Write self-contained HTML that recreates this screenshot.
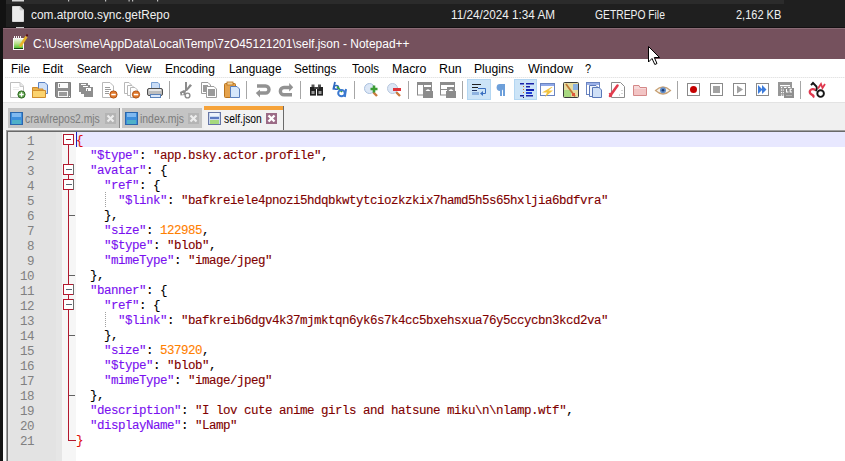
<!DOCTYPE html>
<html><head><meta charset="utf-8">
<style>
*{margin:0;padding:0;box-sizing:border-box}
html,body{width:845px;height:461px;overflow:hidden;background:#1f1f1f;position:relative;font-family:"Liberation Sans",sans-serif}
.a{position:absolute}
.ex,.mi,.tt{transform-origin:0 0}
.ex{color:#f0f0f0;font-size:12px;white-space:nowrap;line-height:14px}
#title{left:3px;top:28px;width:842px;height:31px;background:#75515d;border-top:1px solid #8a6b75}
#menu{left:3px;top:59px;width:842px;height:44px;background:#fff}
.mi{font-size:12px;color:#000;top:62px;line-height:14px;white-space:nowrap}
#tabbar{left:3px;top:103px;width:842px;height:27px;background:#f0f0f0}
.tab{top:108px;height:20px;background:#c4c4c4}
.tt{font-size:12px;line-height:14px;top:112px;white-space:nowrap}
#edb{left:6px;top:130px;width:839px;height:331px;background:#a0a0a0}
#edb2{left:7px;top:131px;width:838px;height:330px;background:#696969}
#lstrip{left:3px;top:130px;width:3px;height:331px;background:#f8f8f8}
#ln{left:8px;top:132px;width:48px;height:329px;background:#e3e3e3}
#bm{left:56px;top:132px;width:6px;height:329px;background:#e6e6e6}
#fold{left:62px;top:132px;width:14px;height:329px;background:#f6f6f6}
#txt{left:76px;top:132px;width:769px;height:329px;background:#fff}
#cur{left:76px;top:132px;width:769px;height:15px;background:#e8e8ff}
.code{font-family:"Liberation Mono",monospace;font-size:12.5px;letter-spacing:-0.5px;-webkit-text-stroke:0.12px currentColor;line-height:15px;white-space:pre;left:76px;top:134px;color:#000}
.k{color:#7a10f0}.s{color:#800000}.n{color:#ff8000}.b{color:#e01010}
.lnn{font-family:"Liberation Mono",monospace;font-size:12.5px;letter-spacing:-0.5px;line-height:15px;white-space:pre;color:#808080;left:0px;top:135px;width:34px;text-align:right}
</style></head><body>
<!-- explorer -->
<div class="a" style="left:6px;top:0;width:778px;height:4px;background:#2b2b2b"></div>
<div class="a" style="left:0;top:0;width:6px;height:28px;background:#121212"></div>

<div id="t_name" class="a ex" style="left:31.0px;top:8px;transform:scaleX(0.9893)">com.atproto.sync.getRepo</div>
<div id="t_date" class="a ex" style="left:451.06px;top:8px;transform:scaleX(0.9762)">11/24/2024 1:34 AM</div>
<div id="t_type" class="a ex" style="left:595.31px;top:8px;transform:scaleX(0.8593)">GETREPO File</div>
<div id="t_size" class="a ex" style="left:736.23px;top:8px;transform:scaleX(0.9167)">2,162 KB</div>
<div class="a" style="left:0;top:28px;width:3px;height:433px;background:#121212"></div>

<div class="a" style="left:3px;top:27px;width:842px;height:1px;background:#141012"></div><div id="title" class="a"></div>
<div id="t_title" class="a ex" style="left:33.0px;top:37px;color:#fff;transform:scaleX(0.9973)">C:\Users\me\AppData\Local\Temp\7zO45121201\self.json - Notepad++</div>

<div id="menu" class="a"></div>
<div id="m0" class="a mi" style="left:10.87px;transform:scaleX(0.9778)">File</div>
<div id="m1" class="a mi" style="left:42.51px;transform:scaleX(1.0)">Edit</div>
<div id="m2" class="a mi" style="left:76.68px;transform:scaleX(0.9162)">Search</div>
<div id="m3" class="a mi" style="left:125.59px;transform:scaleX(1.0)">View</div>
<div id="m4" class="a mi" style="left:164.88px;transform:scaleX(1.0)">Encoding</div>
<div id="m5" class="a mi" style="left:228.76px;transform:scaleX(0.9827)">Language</div>
<div id="m6" class="a mi" style="left:293.96px;transform:scaleX(0.9786)">Settings</div>
<div id="m7" class="a mi" style="left:351.89px;transform:scaleX(0.9704)">Tools</div>
<div id="m8" class="a mi" style="left:391.78px;transform:scaleX(1.0273)">Macro</div>
<div id="m9" class="a mi" style="left:438.91px;transform:scaleX(1.03)">Run</div>
<div id="m10" class="a mi" style="left:474.17px;transform:scaleX(1.0105)">Plugins</div>
<div id="m11" class="a mi" style="left:527.89px;transform:scaleX(1.0476)">Window</div>
<div id="m12" class="a mi" style="left:585.48px;transform:scaleX(0.9167)">?</div>

<div class="a" style="left:5px;top:77px;width:840px;height:1px;background:repeating-linear-gradient(90deg,#e4e4e4 0 1px,#f4f4f4 1px 2px)"></div>
<div id="tabbar" class="a"></div>
<div class="a" style="left:3px;top:102px;width:842px;height:1px;background:#e3e3e3"></div>
<div class="a tab" style="left:8px;width:112px"></div>
<div id="tb0" class="a tt" style="left:25.47px;color:#7c7c7c;transform:scaleX(0.8628)">crawlrepos2.mjs</div>
<div class="a tab" style="left:122px;width:80px"></div>
<div id="tb1" class="a tt" style="left:140.01px;color:#7c7c7c;transform:scaleX(0.8694)">index.mjs</div>
<div class="a" style="left:204px;top:106px;width:80px;height:24px;background:#f2f2f2;border-right:1px solid #6a6a6a"></div>
<div class="a" style="left:204px;top:106px;width:79px;height:4px;background:#f6a33a"></div>
<div id="tb2" class="a tt" style="left:223.59px;color:#000;transform:scaleX(0.8591)">self.json</div>

<div id="edb" class="a"></div><div id="edb2" class="a"></div><div id="lstrip" class="a"></div>
<div id="ln" class="a"></div>
<div id="bm" class="a"></div><div id="fold" class="a"></div>
<div id="txt" class="a"></div>
<div id="cur" class="a"></div>
<div class="a lnn">1
2
3
4
5
6
7
8
9
10
11
12
13
14
15
16
17
18
19
20
21</div>
<div class="a code"><span class="b">{</span>
  <span class="k">"$type"</span>: <span class="s">"app.bsky.actor.profile"</span>,
  <span class="k">"avatar"</span>: {
    <span class="k">"ref"</span>: {
      <span class="k">"$link"</span>: <span class="s">"bafkreiele4pnozi5hdqbkwtytciozkzkix7hamd5h5s65hxljia6bdfvra"</span>
    },
    <span class="k">"size"</span>: <span class="n">122985</span>,
    <span class="k">"$type"</span>: <span class="s">"blob"</span>,
    <span class="k">"mimeType"</span>: <span class="s">"image/jpeg"</span>
  },
  <span class="k">"banner"</span>: {
    <span class="k">"ref"</span>: {
      <span class="k">"$link"</span>: <span class="s">"bafkreib6dgv4k37mjmktqn6yk6s7k4cc5bxehsxua76y5ccycbn3kcd2va"</span>
    },
    <span class="k">"size"</span>: <span class="n">537920</span>,
    <span class="k">"$type"</span>: <span class="s">"blob"</span>,
    <span class="k">"mimeType"</span>: <span class="s">"image/jpeg"</span>
  },
  <span class="k">"description"</span>: <span class="s">"I lov cute anime girls and hatsune miku\n\nlamp.wtf"</span>,
  <span class="k">"displayName"</span>: <span class="s">"Lamp"</span>
<span class="b">}</span></div>
<svg class="a" style="left:0;top:0" width="845" height="461" viewBox="0 0 845 461">
<!-- explorer file icon -->
<path d="M12.5,6.5 H20 L23.5,10 V21.5 H12.5 Z" fill="#ececec" stroke="#d8d8d8"/>
<path d="M20,6.5 V10 H23.5" fill="#bdbdbd" stroke="#cfcfcf"/>
<rect x="16" y="27" width="8" height="1" fill="#cfcfcf"/>
<rect x="12" y="0" width="12" height="1.5" fill="#d8d8d8"/>
<g fill="#bdbdbd"><rect x="68" y="0" width="1.2" height="1.5"/><rect x="105" y="0" width="1.2" height="1.5"/><rect x="128.5" y="0" width="1.2" height="1.5"/><rect x="132" y="0" width="1.2" height="1.5"/><rect x="157" y="0" width="1.2" height="1.5"/></g>
<!-- notepad++ app icon -->
<defs><linearGradient id="npg" x1="0" y1="0" x2="0" y2="1"><stop offset="0" stop-color="#f4f8ee"/><stop offset="0.45" stop-color="#b8e08a"/><stop offset="1" stop-color="#3cb81c"/></linearGradient></defs>
<rect x="13.5" y="38.5" width="10" height="11" fill="url(#npg)" stroke="#fafafa"/>
<rect x="14" y="48" width="9" height="1" fill="#1a4a10"/>
<path d="M14.5,36 v3 M16.5,36 v3 M18.5,36 v3 M20.5,36 v3" stroke="#f4f4f4" stroke-width="1"/>
<path d="M20,46.5 L26.5,36.5" stroke="#e6b42c" stroke-width="2.6"/>
<circle cx="27" cy="35.3" r="1.1" fill="#5a1010"/>
<!-- toolbar: 1 new -->
<g>
<path d="M10.5,82.5 H20 L23.5,86 V97.5 H10.5 Z" fill="#fff" stroke="#bfbfbf"/>
<path d="M20,82.5 V86.5 H23.5" fill="#e8e8e8" stroke="#c8c8c8"/>
<path d="M13,87.5 h6 M13,89.5 h6" stroke="#ececec"/>
<circle cx="21.5" cy="94.5" r="3.6" fill="#5ea24a" stroke="#2f6a25"/>
<path d="M21.5,92.3 v4.4 M19.3,94.5 h4.4" stroke="#fff" stroke-width="1.3"/>
</g>
<!-- 2 open -->
<g>
<path d="M38.5,82.5 H45 L47.5,85 V93.5 H38.5 Z" fill="#cfe0f8" stroke="#5a82c4"/>
<path d="M32.5,87.5 H37.5 L38.5,89 H43 V97.5 H32.5 Z" fill="#eab24c" stroke="#cf8a2a"/>
<path d="M32.5,90.5 H45.5 V97.5 H32.5 Z" fill="#fbd36f" stroke="#d08c2c"/>
</g>
<!-- 3 save (disabled) -->
<g>
<path d="M55.5,82.5 H70.5 V97.5 H56.5 L55.5,96.5 Z" fill="#8e8e8e" stroke="#7c7c7c"/>
<rect x="58" y="83" width="10" height="5" fill="#fbfbfb"/>
<rect x="59" y="84" width="1" height="3" fill="#8e8e8e"/>
<rect x="58" y="91" width="10" height="6" fill="#f6f6f6"/>
<rect x="59" y="92" width="8" height="4" fill="#9a9a9a"/>
<rect x="69" y="96" width="1" height="1" fill="#fff"/>
</g>
<!-- 4 save all -->
<g fill="#8e8e8e">
<rect x="79" y="83" width="9" height="9"/>
<rect x="81" y="85" width="9" height="9"/>
<rect x="84" y="87" width="9" height="10"/>
<rect x="81" y="84" width="5" height="1" fill="#fff"/>
<rect x="83" y="86" width="5" height="1" fill="#fff"/>
<rect x="86" y="88" width="5" height="3" fill="#fff"/>
<rect x="87" y="89" width="1" height="2" fill="#8e8e8e"/>
</g>
<!-- 5 close -->
<g>
<path d="M102.5,82.5 H110 L113.5,86 V97.5 H102.5 Z" fill="#fff" stroke="#b8b8b8"/>
<path d="M105,87.5 h5 M105,89.5 h6 M105,91.5 h4 M105,93.5 h4" stroke="#9a9a9a"/>
<circle cx="113.5" cy="94.5" r="3.6" fill="#e27a2c" stroke="#b35414"/>
<rect x="111.3" y="93.8" width="4.4" height="1.5" fill="#fff"/>
</g>
<!-- 6 close all -->
<g>
<path d="M124.5,82.5 H129 L131.5,85 V93.5 H124.5 Z" fill="#fff" stroke="#b8b8b8"/>
<path d="M127.5,85.5 H132 L134.5,88 V95.5 H127.5 Z" fill="#fff" stroke="#b8b8b8"/>
<path d="M130.5,87.5 H135 L137.5,90 V97.5 H130.5 Z" fill="#fff" stroke="#b8b8b8"/>
<circle cx="136" cy="94.5" r="3.6" fill="#e27a2c" stroke="#b35414"/>
<rect x="133.8" y="93.8" width="4.4" height="1.5" fill="#fff"/>
</g>
<!-- 7 print -->
<g>
<path d="M151.5,82.5 H158 L159.5,84 V89.5 H151.5 Z" fill="#c9ddf7" stroke="#7aa0d2"/>
<rect x="147.5" y="88.5" width="15" height="7" rx="1.5" fill="#bdbdbd" stroke="#4e4e4e"/>
<rect x="149" y="89" width="12" height="2" fill="#e6e6e6"/>
<rect x="150.5" y="94.5" width="10" height="3" fill="#dbe8fa" stroke="#5a82ba"/>
</g>
<rect x="169" y="81" width="1" height="18" fill="#a6a6a6"/>
<!-- 8 cut -->
<g fill="#8c8c8c">
<rect x="185" y="82" width="2" height="9"/>
<path d="M190,84 L192,85.5 L187,91 L185.5,90 Z"/>
<path d="M180,92 L184,90 L186,91 L185,95 L180.5,95.5 Z"/>
<circle cx="187.5" cy="95.5" r="2.4" fill="none" stroke="#8c8c8c" stroke-width="1.4"/>
<rect x="182" y="93" width="1.5" height="1.5" fill="#fff"/>
</g>
<!-- 9 copy -->
<g>
<path d="M201.5,82.5 H208 L210.5,85 V93.5 H201.5 Z" fill="#fff" stroke="#9c9c9c"/>
<rect x="203" y="85" width="5" height="7" fill="#9a9a9a"/>
<path d="M206.5,86.5 H214 L216.5,89 V97.5 H206.5 Z" fill="#fff" stroke="#9c9c9c"/>
<rect x="208" y="89" width="7" height="7" fill="#9a9a9a"/>
</g>
<!-- 10 paste -->
<g>
<rect x="224.5" y="83.5" width="11" height="14" rx="1" fill="#e5a24c" stroke="#b9741e"/>
<rect x="227" y="82" width="6" height="3" fill="#f4d39a" stroke="#b9741e" stroke-width="0.8"/>
<path d="M230.5,86.5 H237 L239.5,89 V97.5 H230.5 Z" fill="#d6e7fb" stroke="#5a7fbd"/>
</g>
<rect x="246" y="81" width="1" height="18" fill="#a6a6a6"/>
<!-- 11 undo -->
<path d="M257,86 H265.5 A3.5,3.5 0 0 1 265.5,93 H259.5" fill="none" stroke="#929292" stroke-width="3.4"/>
<path d="M255.8,93 L260,89.6 V97.6 Z" fill="#929292"/>
<!-- 12 redo -->
<path d="M292,94.8 H284 A3.65,3.65 0 0 1 284,87.5 H290" fill="none" stroke="#929292" stroke-width="3.4"/>
<path d="M293.2,87.2 L289.2,83 V91.4 Z" fill="#929292"/>
<rect x="300" y="81" width="1" height="18" fill="#a6a6a6"/>
<!-- 13 find -->
<g>
<rect x="311.5" y="84.5" width="3" height="4" fill="#555"/>
<rect x="318" y="84.5" width="3" height="4" fill="#555"/>
<rect x="310" y="87" width="6" height="8.6" fill="#222"/>
<rect x="317" y="87" width="6" height="8.6" fill="#222"/>
<rect x="314" y="87" width="5" height="2" fill="#444"/>
<rect x="311.5" y="91" width="3" height="3" fill="#9a9a9a"/>
<rect x="318.5" y="91" width="3" height="3" fill="#9a9a9a"/>
</g>
<!-- 14 replace -->
<g fill="none">
<path d="M335,82 L333.2,89.6" stroke="#2f68c0" stroke-width="1.8"/>
<ellipse cx="336.3" cy="87.4" rx="2.2" ry="1.9" stroke="#2f68c0" stroke-width="1.5"/>
<path d="M337,86.5 L342,92" stroke="#3aa33a" stroke-width="1.8"/>
<ellipse cx="341.5" cy="93.2" rx="3.3" ry="3.1" stroke="#3a78d0" stroke-width="2"/>
<path d="M346,89 L344.8,97" stroke="#3a78d0" stroke-width="2"/>
</g>
<rect x="354" y="81" width="1" height="18" fill="#a6a6a6"/>
<!-- 15 zoom in -->
<g>
<path d="M372.5,91.5 L377,96" stroke="#c97a3d" stroke-width="2.4"/>
<circle cx="369.5" cy="88.5" r="5" fill="#dce7f6" stroke="#a9c0de"/>
<path d="M374,85.5 v7 M370.5,89 h7" stroke="#3b9c33" stroke-width="2.6"/>
</g>
<!-- 16 zoom out -->
<g>
<path d="M395.5,91.5 L400,96" stroke="#c97a3d" stroke-width="2.4"/>
<circle cx="392.5" cy="88.5" r="5" fill="#dce7f6" stroke="#b8c8de"/>
<rect x="393" y="88" width="8" height="3" fill="#e0333a"/>
</g>
<rect x="408" y="81" width="1" height="18" fill="#a6a6a6"/>
<!-- 17 sync v -->
<g fill="#8c8c8c">
<rect x="417.5" y="82.5" width="14" height="12.5" fill="#fff" stroke="#8c8c8c"/>
<rect x="417" y="82" width="15" height="3"/>
<rect x="423" y="85" width="1" height="10"/>
<rect x="424" y="87" width="8" height="4"/>
<rect x="423" y="91" width="10" height="7"/>
<path d="M425.5,91 Q428,87.5 430.5,91 Z" fill="#fff"/>
</g>
<!-- 18 sync h -->
<g fill="#8c8c8c">
<rect x="440.5" y="82.5" width="14" height="12.5" fill="#fff" stroke="#8c8c8c"/>
<rect x="440" y="82" width="15" height="3"/>
<rect x="441" y="89" width="6" height="1"/>
<rect x="447" y="87" width="8" height="4"/>
<rect x="446" y="91" width="10" height="7"/>
<path d="M448.5,91 Q451,87.5 453.5,91 Z" fill="#fff"/>
</g>
<rect x="462" y="81" width="1" height="18" fill="#a6a6a6"/>
<!-- 19 wrap (checked) -->
<rect x="467.5" y="79.5" width="23" height="20" fill="#cce4f7" stroke="#b3d6f2"/>
<g>
<rect x="472" y="84" width="9" height="1" fill="#202020"/>
<rect x="472" y="87" width="6" height="1" fill="#202020"/>
<rect x="472" y="90" width="5" height="1" fill="#203060"/>
<path d="M478,88.5 H485.5 V93.5 H481" fill="none" stroke="#3a6fc0" stroke-width="1"/>
<path d="M480,93.5 L483,91 V96 Z" fill="#3a6fc0"/>
<rect x="472" y="92" width="7" height="3" fill="#8fb3e0"/>
</g>
<!-- 20 pilcrow -->
<g fill="#6d9fda">
<circle cx="500" cy="87.5" r="3.4"/>
<rect x="500" y="84" width="2" height="12"/>
<rect x="503" y="84" width="2" height="12"/>
<rect x="500" y="84" width="5" height="1.5"/>
</g>
<!-- 21 indent guide (checked) -->
<rect x="514.5" y="79.5" width="22" height="20" fill="#cce4f7" stroke="#b3d6f2"/>
<g>
<rect x="520" y="83" width="4" height="1.5" fill="#1a22a8"/>
<rect x="526" y="83" width="8" height="1.5" fill="#1a22a8"/>
<rect x="526" y="86" width="4" height="1.5" fill="#1a22a8"/>
<rect x="526" y="89" width="8" height="2" fill="#1020b0"/>
<rect x="526" y="92" width="6" height="2" fill="#2040d8"/>
<rect x="520" y="95" width="4" height="1.5" fill="#1a22a8"/>
<rect x="526" y="95" width="7" height="1.5" fill="#1a22a8"/>
<rect x="523" y="86" width="1" height="1" fill="#d07020"/>
<rect x="523" y="89" width="1" height="1" fill="#d07020"/>
<rect x="523" y="92" width="1" height="1" fill="#d07020"/>
<rect x="523" y="97" width="1" height="1" fill="#202060"/>
</g>
<!-- 22 doc map -->
<g>
<rect x="540.5" y="83.5" width="14" height="12" fill="#fff" stroke="#6a84c0"/>
<rect x="541" y="84" width="13" height="2" fill="#8fa8e8"/>
<path d="M551.5,87 L542,92.5 H547 L545,97 L553,90.5 H548.5 L552.5,87 Z" fill="#f3c441"/>
</g>
<!-- 23 function list (map) -->
<g>
<rect x="563.5" y="82.5" width="15" height="15" rx="1" fill="#e6dca0" stroke="#3a3a3a"/>
<rect x="564" y="90" width="7" height="7" fill="#a8d880"/>
<rect x="573" y="84" width="5" height="6" fill="#8ab0e0"/>
<path d="M566,84 L575,96.5" stroke="#c07838" stroke-width="1.8"/>
<rect x="572" y="93" width="3" height="3" fill="#e05a3a"/>
</g>
<!-- 24 doc switcher -->
<g>
<rect x="586.5" y="82.5" width="13" height="12" fill="#fff" stroke="#6a84c0"/>
<rect x="587" y="83" width="12" height="2" fill="#9ab0e8"/>
<path d="M589.5,85.5 H596 L598.5,88 V96.5 H589.5 Z" fill="#eef4fc" stroke="#5a78b8"/>
<path d="M592.5,87.5 H599 L601.5,90 V97.5 H592.5 Z" fill="#cfe0f7" stroke="#5a78b8"/>
</g>
<!-- 25 function -->
<g>
<path d="M611.5,82.5 H620.5 L624.5,86.5 V97.5 H611.5 Z" fill="#fff" stroke="#8c8c8c"/>
<path d="M622,90 v1 M622,93 v1 M619,95 h1" stroke="#aaa"/>
<path d="M610,96 L617.5,85.5" stroke="#e23c4e" stroke-width="2.6" stroke-linecap="round"/>
<path d="M609.5,93 L611.5,96.5" stroke="#e23c4e" stroke-width="2"/>
</g>
<!-- 26 folder pink -->
<g>
<path d="M633.5,85.5 H639 L640,87.5 H646.5 V95.5 H633.5 Z" fill="#f6d8d8" stroke="#d48888"/>
<rect x="634" y="89" width="12" height="6" fill="#f2c4c4"/>
</g>
<!-- 27 eye -->
<g>
<path d="M655.5,90.5 Q663,83.5 670.5,90.5 Q663,97.5 655.5,90.5 Z" fill="#f6f2ea" stroke="#c9a276" stroke-width="1.2"/>
<circle cx="663" cy="90.2" r="3" fill="#5f8cc8"/>
<circle cx="663" cy="90.2" r="1.3" fill="#1a3870"/>
</g>
<rect x="677" y="81" width="1" height="18" fill="#a6a6a6"/>
<!-- 28 record -->
<rect x="687.5" y="83.5" width="12" height="12" fill="#fff" stroke="#8a8a8a"/>
<circle cx="693.5" cy="89.5" r="3.5" fill="#c40000"/>
<!-- 29 stop -->
<rect x="710.5" y="83.5" width="12" height="12" fill="#fff" stroke="#8a8a8a"/>
<rect x="713" y="86" width="7" height="7" fill="#a2a2a2"/>
<!-- 30 play -->
<rect x="733.5" y="83.5" width="12" height="12" fill="#fff" stroke="#8a8a8a"/>
<path d="M737,85.5 L743,89.5 L737,93.5 Z" fill="#a2a2a2"/>
<!-- 31 fast -->
<rect x="756.5" y="83.5" width="12" height="12" fill="#fff" stroke="#8a8a8a"/>
<path d="M758,85 L762.5,89.5 L758,94 Z M762,85 L766.5,89.5 L762,94 Z" fill="#3b7bdc"/>
<!-- 32 save macro -->
<g fill="#fff">
<rect x="778" y="82" width="14" height="14" fill="#979797"/>
<rect x="780" y="85" width="10" height="1.2"/>
<rect x="781" y="87" width="1.2" height="1.2"/><rect x="784" y="87" width="2.5" height="1.2"/><rect x="788" y="87" width="2.5" height="1.2"/>
<rect x="781" y="89.5" width="1.2" height="1.2"/><rect x="783.2" y="89.5" width="1.2" height="1.2"/>
<rect x="781" y="92" width="1.2" height="1.2"/><rect x="783.2" y="92" width="1.2" height="1.2"/>
<rect x="781" y="94.5" width="1.2" height="1.2"/><rect x="783.2" y="94.5" width="1.2" height="1.2"/>
<rect x="784" y="88" width="10" height="10" fill="#8e8e8e"/>
<path d="M786.5,89 v3 h2 M792,89.3 h-1.8 v2.7 h1.8" stroke="#fff" stroke-width="1.1" fill="none"/>
<rect x="786" y="95" width="6" height="1" fill="#b0b0b0"/>
</g>
<rect x="800" y="81" width="1" height="18" fill="#a6a6a6"/>
<!-- 33 plugin -->
<g fill="none">
<path d="M811,85.2 L813,83 L816.5,86.5 Q817.5,89 815.5,91" stroke="#151515" stroke-width="1.9"/>
<circle cx="820.6" cy="93.6" r="3.3" stroke="#151515" stroke-width="1.9"/>
<path d="M818,88.5 L821,84 L822.5,88 L825,84" stroke="#e0384e" stroke-width="1.8"/>
<path d="M815.5,90 C812,88 809,90 810,93 C811,95.5 815,94.5 813,97.5" stroke="#e0384e" stroke-width="2.3"/>
</g>
<!-- tab icons -->
<g>
<rect x="10.5" y="112.5" width="12" height="12" fill="#3d8edc" stroke="#2a66ac"/>
<rect x="12" y="113" width="9" height="4" fill="#7fb8f0"/>
<rect x="12" y="120" width="9" height="4" fill="#4fb0c8"/>
<rect x="125.5" y="112.5" width="12" height="12" fill="#3d8edc" stroke="#2a66ac"/>
<rect x="127" y="113" width="9" height="4" fill="#7fb8f0"/>
<rect x="127" y="120" width="9" height="4" fill="#4fb0c8"/>
<rect x="208.5" y="112.5" width="12" height="12" fill="#c8d8f0" stroke="#6776a6"/>
<rect x="210" y="113" width="9" height="3" fill="#eef4fc"/>
<rect x="210" y="117" width="9" height="2" fill="#5c7ac2"/>
<rect x="210" y="120" width="9" height="4" fill="#a6d97e"/>
</g>
<!-- tab close buttons -->
<g>
<rect x="105" y="113" width="11" height="11" fill="#b4b4b4"/>
<path d="M107.5,115.5 L113.5,121.5 M113.5,115.5 L107.5,121.5" stroke="#ececec" stroke-width="2.2"/>
<rect x="188" y="113" width="11" height="11" fill="#b4b4b4"/>
<path d="M190.5,115.5 L196.5,121.5 M196.5,115.5 L190.5,121.5" stroke="#ececec" stroke-width="2.2"/>
<rect x="266" y="113" width="11" height="11" fill="#9b6b86"/>
<path d="M268.5,115.5 L274.5,121.5 M274.5,115.5 L268.5,121.5" stroke="#fff" stroke-width="2.4"/>
<rect x="119" y="108" width="1" height="20" fill="#8a8a8a"/>
</g>
<!-- fold markers -->
<g>
<rect x="68" y="145" width="1" height="295" fill="#b3182e"/>
<rect x="68" y="440" width="8" height="1" fill="#b3182e"/>
<rect x="69" y="215" width="6" height="1" fill="#606060"/>
<rect x="69" y="275" width="6" height="1" fill="#606060"/>
<rect x="69" y="335" width="6" height="1" fill="#606060"/>
<rect x="69" y="395" width="6" height="1" fill="#606060"/>
<rect x="63.5" y="134.5" width="10" height="10" fill="#fff" stroke="#b3182e"/>
<rect x="66" y="139" width="5" height="1" fill="#b3182e"/>
<rect x="63.5" y="164.5" width="10" height="10" fill="#fff" stroke="#b3182e"/>
<rect x="66" y="169" width="6" height="1" fill="#5a6470"/><rect x="73" y="164" width="1" height="11" fill="#6a6a6a"/>
<rect x="63.5" y="179.5" width="10" height="10" fill="#fff" stroke="#b3182e"/>
<rect x="66" y="184" width="6" height="1" fill="#5a6470"/><rect x="73" y="179" width="1" height="11" fill="#6a6a6a"/>
<rect x="63.5" y="284.5" width="10" height="10" fill="#fff" stroke="#b3182e"/>
<rect x="66" y="289" width="6" height="1" fill="#5a6470"/><rect x="73" y="284" width="1" height="11" fill="#6a6a6a"/>
<rect x="63.5" y="299.5" width="10" height="10" fill="#fff" stroke="#b3182e"/>
<rect x="66" y="304" width="6" height="1" fill="#5a6470"/><rect x="73" y="299" width="1" height="11" fill="#6a6a6a"/>
</g>
<path d="M105.5,192 V207 M105.5,312 V327" stroke="#a0a0a0" stroke-dasharray="1 1"/>
<!-- caret -->
<rect x="76" y="132" width="1" height="15" fill="#2020c0"/>
<!-- mouse cursor -->
<path d="M648.5,46.5 V62 L652,58.5 L654.8,64.5 L657,63.5 L654.3,57.5 H659.5 Z" fill="#fff" stroke="#000" stroke-width="1"/>
</svg>
</body></html>
